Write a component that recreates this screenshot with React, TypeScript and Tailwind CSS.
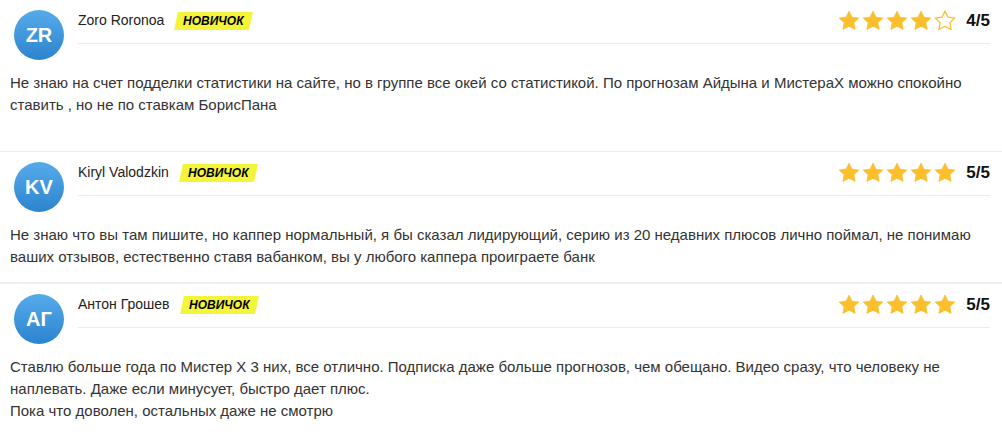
import React from "react";

const STAR = "M12 2.1l3 6.1 6.75.9-4.95 4.65 1.3 6.7L12 17.2l-6.1 3.25 1.3-6.7-4.95-4.65 6.75-.9z";

function Star({ filled }: { filled: boolean }) {
  return (
    <svg width="24" height="24" viewBox="0 0 24 24">
      <path
        d={STAR}
        fill={filled ? "#fbbf2c" : "none"}
        stroke="#fbbf2c"
        strokeWidth={filled ? 0.8 : 1.3}
        strokeLinejoin="round"
      />
    </svg>
  );
}

type Review = {
  initials: string;
  name: string;
  rating: number;
  lines: string[];
  pb: string;
  border: string;
};

const reviews: Review[] = [
  {
    initials: "ZR",
    name: "Zoro Roronoa",
    rating: 4,
    lines: [
      "Не знаю на счет подделки статистики на сайте, но в группе все окей со статистикой. По прогнозам Айдына и МистераХ можно спокойно ставить , но не по ставкам БорисПана",
    ],
    pb: "pb-[35px]",
    border: "border-b border-[#ececec]",
  },
  {
    initials: "KV",
    name: "Kiryl Valodzkin",
    rating: 5,
    lines: [
      "Не знаю что вы там пишите, но каппер нормальный, я бы сказал лидирующий, серию из 20 недавних плюсов лично поймал, не понимаю ваших отзывов, естественно ставя вабанком, вы у любого каппера проиграете банк",
    ],
    pb: "pb-[14px]",
    border: "border-b-2 border-[#eeeeee]",
  },
  {
    initials: "АГ",
    name: "Антон Грошев",
    rating: 5,
    lines: [
      "Ставлю больше года по Мистер Х 3 них, все отлично. Подписка даже больше прогнозов, чем обещано. Видео сразу, что человеку не наплевать. Даже если минусует, быстро дает плюс.",
      "Пока что доволен, остальных даже не смотрю",
    ],
    pb: "pb-[12px]",
    border: "",
  },
];

function ReviewBlock({ r }: { r: Review }) {
  return (
    <div className={`pt-[10px] ${r.pb} ${r.border}`}>
      <div className="flex">
        <div className="ml-[14px] w-[50px] h-[50px] rounded-full bg-gradient-to-b from-[#55abea] to-[#2c84cf] flex items-center justify-center text-white font-bold text-[20px] shrink-0">
          {r.initials}
        </div>
        <div className="flex-1 ml-[14px] mr-[12px]">
          <div className="flex items-center h-[21px]">
            <span className="text-[14px] text-[#222]">{r.name}</span>
            <span className="ml-[12px] -skew-x-12 bg-[#f4f43a] h-[18px] px-[7px] flex items-center">
              <span className="skew-x-12 italic font-bold text-[12px] text-black">
                НОВИЧОК
              </span>
            </span>
            <div className="ml-auto flex items-center">
              {[0, 1, 2, 3, 4].map((i) => (
                <Star key={i} filled={i < r.rating} />
              ))}
              <span className="ml-[9px] font-bold text-[17px] text-[#111]">
                {r.rating}/5
              </span>
            </div>
          </div>
          <div className="mt-[12px] border-b border-[#ececec]" />
        </div>
      </div>
      <div className="mt-[12px] pl-[10px] pr-[12px] text-[15px] leading-[22px] text-[#333]">
        {r.lines.map((l, i) => (
          <p key={i}>{l}</p>
        ))}
      </div>
    </div>
  );
}

export default function App() {
  return (
    <div
      className="w-[1002px] h-[436px] bg-white overflow-hidden"
      style={{ fontFamily: '"Liberation Sans", Arial, sans-serif' }}
    >
      {reviews.map((r, i) => (
        <ReviewBlock key={i} r={r} />
      ))}
    </div>
  );
}
